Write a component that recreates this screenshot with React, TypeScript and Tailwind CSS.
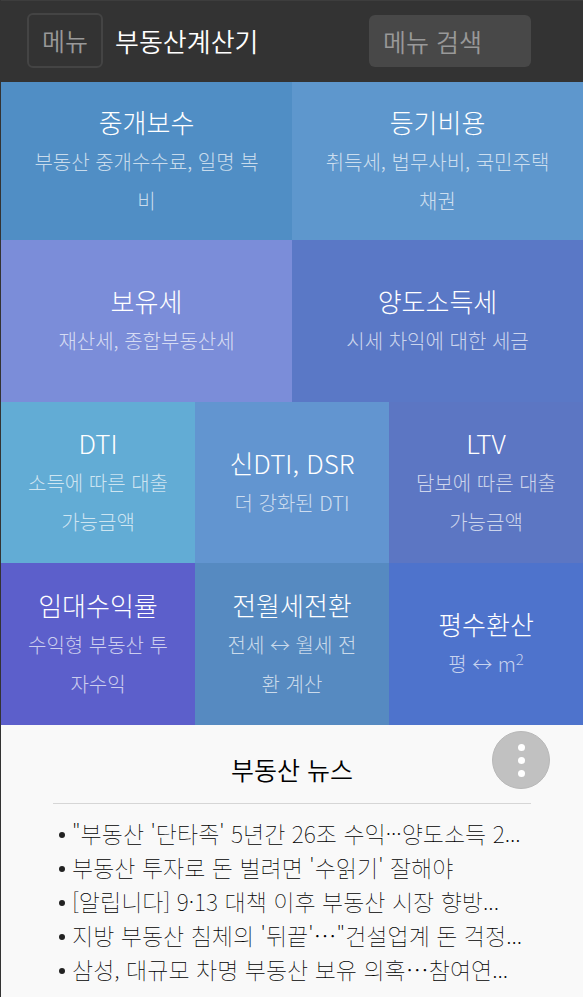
import React from "react";

type Tile = {
  title: string;
  desc: React.ReactNode;
  color: string;
};

const wideTiles: Tile[] = [
  { title: "중개보수", desc: "부동산 중개수수료, 일명 복비", color: "bg-[#508ec5] h-[158px]" },
  { title: "등기비용", desc: "취득세, 법무사비, 국민주택채권", color: "bg-[#5e97cd] h-[158px]" },
  { title: "보유세", desc: "재산세, 종합부동산세", color: "bg-[#7b8dd9] h-[162px]" },
  { title: "양도소득세", desc: "시세 차익에 대한 세금", color: "bg-[#5a78c6] h-[162px]" },
];

const narrowTiles: Tile[] = [
  { title: "DTI", desc: "소득에 따른 대출 가능금액", color: "bg-[#62acd5] h-[161px]" },
  { title: "신DTI, DSR", desc: "더 강화된 DTI", color: "bg-[#6295d0] h-[161px]" },
  { title: "LTV", desc: "담보에 따른 대출 가능금액", color: "bg-[#5c76c3] h-[161px]" },
  { title: "임대수익률", desc: "수익형 부동산 투자수익", color: "bg-[#5c5fcb] h-[162px]" },
  { title: "전월세전환", desc: "전세 ↔ 월세 전환 계산", color: "bg-[#568ac1] h-[162px]" },
  {
    title: "평수환산",
    desc: (
      <>
        평 ↔ m<sup>2</sup>
      </>
    ),
    color: "bg-[#4e73cc] h-[162px]",
  },
];

const news = [
  "\"부동산 '단타족' 5년간 26조 수익···양도소득 2...",
  "부동산 투자로 돈 벌려면 '수읽기' 잘해야",
  "[알립니다] 9·13 대책 이후 부동산 시장 향방...",
  "지방 부동산 침체의 '뒤끝'…\"건설업계 돈 걱정...",
  "삼성, 대규모 차명 부동산 보유 의혹…참여연...",
];

const TileLink = ({ tile }: { tile: Tile }) => (
  <a
    href="#"
    className={`flex flex-col items-center justify-center px-[26px] pb-[2px] text-center break-all ${tile.color}`}
  >
    <span className="text-[26px] leading-[41px] font-light text-white">{tile.title}</span>
    <span className="text-[20px] leading-[39px] font-light text-white/70">{tile.desc}</span>
  </a>
);

const App = () => {
  return (
    <div
      lang="ko"
      className="min-h-screen border-l border-[#333333] bg-[#f9f9f9] font-['Noto_Sans_CJK_KR',sans-serif]"
    >
      <header className="flex h-[82px] items-center border-t border-[#3d3d3d] bg-[#333333] pr-[52px] pb-[2px] pl-[26px] text-[25px] font-[350]">
        <button
          type="button"
          className="h-[55px] shrink-0 rounded-md border-2 border-[#444444] px-[13px] text-[#999999]"
        >
          메뉴
        </button>
        <h1 className="ml-3 text-[26px] whitespace-nowrap text-white">부동산계산기</h1>
        <input
          type="search"
          aria-label="메뉴 검색"
          placeholder="메뉴 검색"
          className="ml-auto h-[52px] w-[162px] rounded-md bg-[#484848] px-[14px] text-white outline-none placeholder:text-[#999999]"
        />
      </header>

      <nav>
        <div className="grid grid-cols-2">
          {wideTiles.map((tile) => (
            <TileLink key={tile.title} tile={tile} />
          ))}
        </div>
        <div className="grid grid-cols-3">
          {narrowTiles.map((tile) => (
            <TileLink key={tile.title} tile={tile} />
          ))}
        </div>
      </nav>

      <section className="relative px-[52px] pt-6">
        <h2 className="border-b border-[#d6d6d6] pb-[14px] text-center text-[25px] leading-10 font-[350] text-black">
          부동산 뉴스
        </h2>
        <ul className="mt-3 pl-[6px]">
          {news.map((item) => (
            <li key={item} className="flex items-center text-[23px] leading-[34px] text-black">
              <span className="mt-1 mr-[7px] size-[6px] shrink-0 rounded-full bg-[#222222]" />
              <a href="#" className="truncate font-thin">
                {item}
              </a>
            </li>
          ))}
        </ul>
        <button
          type="button"
          aria-label="더보기"
          className="absolute top-[6px] right-[33px] flex size-[58px] flex-col items-center justify-center gap-[6px] rounded-full border border-[#b8b8b8] bg-[#c1c1c1]"
        >
          <span className="size-[7px] rounded-full bg-white" />
          <span className="size-[7px] rounded-full bg-white" />
          <span className="size-[7px] rounded-full bg-white" />
        </button>
      </section>
    </div>
  );
};

export default App;
